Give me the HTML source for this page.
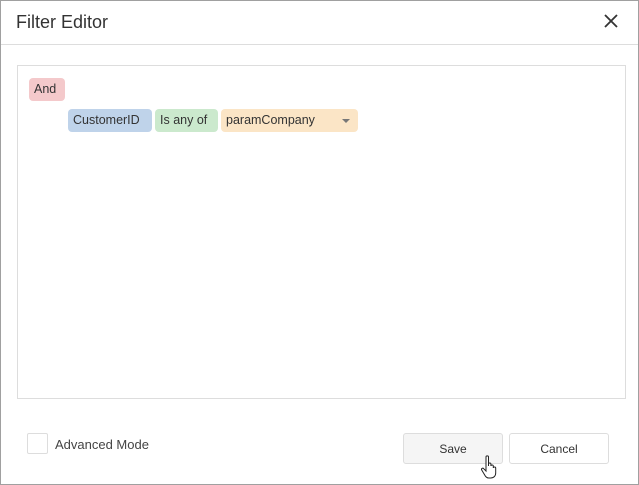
<html><head><style>
body{margin:0;width:639px;height:485px;overflow:hidden;font-family:"Liberation Sans",sans-serif;background:#fff}
.dlg{position:absolute;left:0;top:0;width:637px;height:483px;border:1px solid #a0a0a0;background:#fff}
.t{position:absolute;left:15px;top:11px;font-size:18px;color:#333}
.hd{position:absolute;left:0;top:43px;width:637px;height:1px;background:#ddd}
.box{position:absolute;left:16px;top:64px;width:607px;height:332px;border:1px solid #ddd}
.c{position:absolute;height:23px;line-height:23px;font-size:12.5px;color:#333;border-radius:4px;padding:0 5px;box-sizing:border-box}
.btn{position:absolute;top:432px;width:100px;height:31px;border:1px solid #ddd;border-radius:3px;box-sizing:border-box;text-align:center;line-height:31px;font-size:12px;color:#333}
</style></head><body><div class="dlg">
<div class="t">Filter Editor</div>
<svg style="position:absolute;left:603px;top:13px" width="14" height="14"><path d="M1 1L13 13M13 1L1 13" stroke="#333" stroke-width="1.8"/></svg>
<div class="hd"></div>
<div class="box"></div>
<div class="c" style="left:28px;top:77px;width:36px;background:#f4c9cb">And</div>
<div class="c" style="left:67px;top:108px;width:84px;background:#bfd3ea">CustomerID</div>
<div class="c" style="left:154px;top:108px;width:63px;background:#cbe9cd">Is any of</div>
<div class="c" style="left:220px;top:108px;width:137px;background:#fbe5c6">paramCompany<svg style="position:absolute;left:121px;top:10px" width="8" height="4"><path d="M0 0H8L4 4Z" fill="#777"/></svg></div>
<div style="position:absolute;left:26px;top:432px;width:21px;height:21px;border:1px solid #ddd;box-sizing:border-box;border-radius:2px"></div>
<div style="position:absolute;left:54px;top:436px;font-size:13px;color:#444">Advanced Mode</div>
<div class="btn" style="left:402px;background:#f5f5f5">Save</div>
<div class="btn" style="left:508px;background:#fff">Cancel</div>
<svg style="position:absolute;left:479px;top:454px" width="20" height="26"><path d="M6 2c0-1.5 2.5-1.5 2.5 0v9l0-2c0-1.4 2.4-1.4 2.4 0v2c0-1.4 2.4-1.4 2.4 0v2c0-1.4 2.4-1.4 2.4 0v5c0 3-2 5-5 5h-2c-2 0-3-1-4-3l-3-5c-.8-1.300 1-2.5 2-1.3L6 16Z" fill="#fff" stroke="#222" stroke-width="1"/></svg>
</div></body></html>
